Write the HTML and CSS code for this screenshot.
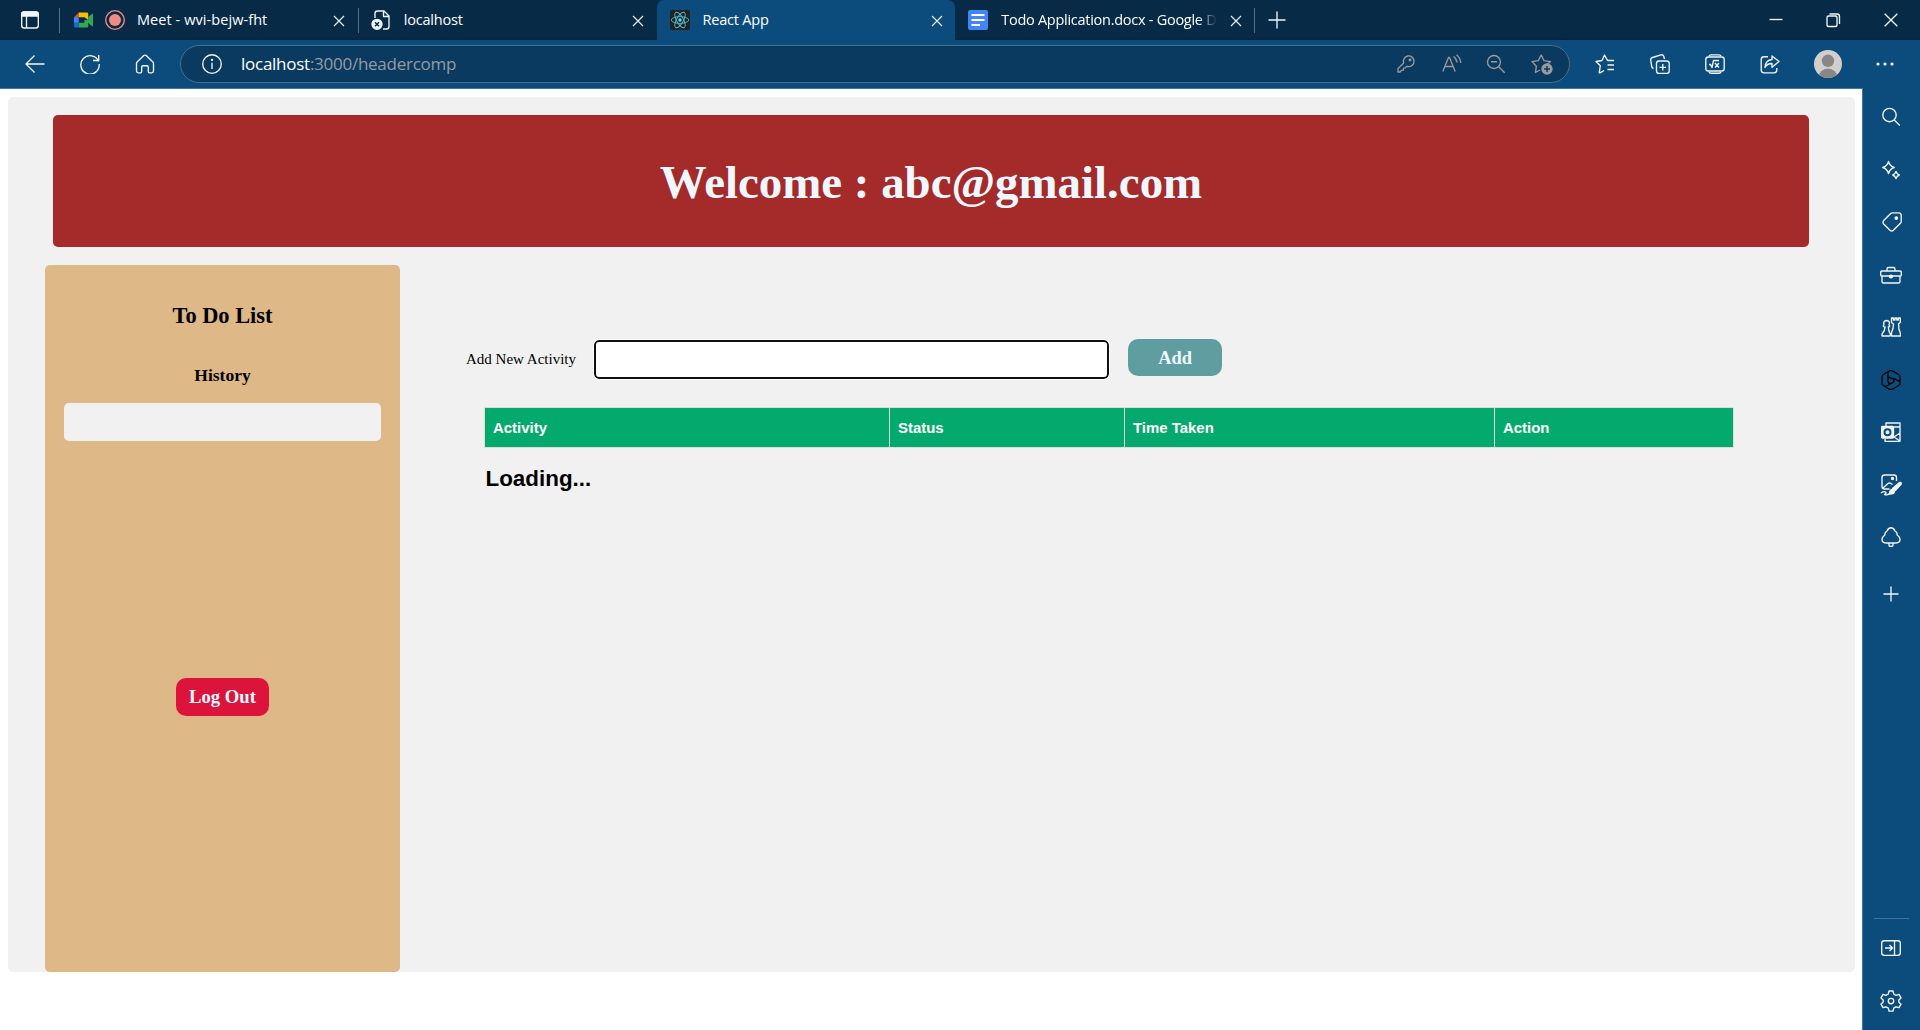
FILE: index.html
```html
<!DOCTYPE html>
<html lang="en">
<head>
<meta charset="utf-8">
<title>React App</title>
<link rel="stylesheet" href="styles.css">
</head>
<body>
<div class="browser">
  <header class="tabbar">
    <div class="tab-actions">
      <svg class="icon" viewBox="0 0 20 20"><rect x="1.7" y="2" width="16.6" height="16" rx="2.5"/><path class="solid" d="M1.7 6V4.5A2.5 2.5 0 0 1 4.2 2h11.6a2.5 2.5 0 0 1 2.5 2.5V6z"/><path d="M6.5 6v12"/></svg>
    </div>
    <div class="tab tab-meet divided">
      <svg class="favicon-meet" viewBox="0 0 20 16"><path fill="#ea4335" d="M5 0v5H0z"/><path fill="#fbbc04" d="M5 0h8.500Q15 0 15 1.500V8l-4-3H5z"/><path fill="#4285f4" d="M0 5h5v6H0z"/><path fill="#1967d2" d="M0 11h5v5H1.500Q0 16 0 14.500z"/><path fill="#34a853" d="M5 11h6V8h4V5l4-3.500q1-.5 1 .5v12q0 1-1 .5L15 11v3.500Q15 16 13.500 16H5z"/></svg>
      <svg class="icon rec" viewBox="0 0 20 20"><circle cx="10" cy="10" r="9.300"/><circle class="rec-dot" cx="10" cy="10" r="6"/></svg>
      <span class="tab-title">Meet - wvi-bejw-fht</span>
      <svg class="close" viewBox="0 0 12 12"><path d="M1 1l10 10M11 1L1 11"/></svg>
    </div>
    <div class="tab tab-local divided">
      <svg class="icon" viewBox="0 0 20 20"><path d="M4 8V3.500A2.500 2.500 0 0 1 6.500 1H13l5 5v10.500a2.500 2.500 0 0 1-2.500 2.500H12M12.500 1v5.500H18"/><circle class="solid" cx="6" cy="14.300" r="5"/><path class="dark" d="M4 12.300l4 4m0-4l-4 4"/></svg>
      <span class="tab-title">localhost</span>
      <svg class="close" viewBox="0 0 12 12"><path d="M1 1l10 10M11 1L1 11"/></svg>
    </div>
    <div class="tab tab-active">
      <svg class="favicon-react" viewBox="0 0 20 20"><rect width="20" height="20" rx="2" fill="#222"/><g fill="none" stroke="#53bdd6" stroke-width=".9"><ellipse cx="10" cy="10" rx="8.700" ry="3.400"/><ellipse cx="10" cy="10" rx="8.700" ry="3.400" transform="rotate(60 10 10)"/><ellipse cx="10" cy="10" rx="8.700" ry="3.400" transform="rotate(120 10 10)"/></g><circle cx="10" cy="10" r="1.700" fill="#61dafb"/></svg>
      <span class="tab-title">React App</span>
      <svg class="close" viewBox="0 0 12 12"><path d="M1 1l10 10M11 1L1 11"/></svg>
    </div>
    <div class="tab tab-docs">
      <svg class="icon" viewBox="0 0 20 20"><rect width="20" height="20" rx="2" fill="#4285f4" stroke="none"/><path stroke="#fff" stroke-width="2" d="M3.500 5h13M3.500 10h13M3.500 15H12"/></svg>
      <span class="tab-title fade">Todo Application.docx - Google D</span>
      <svg class="close" viewBox="0 0 12 12"><path d="M1 1l10 10M11 1L1 11"/></svg>
    </div>
    <div class="new-tab divided">
      <svg class="icon" viewBox="0 0 20 20"><path d="M10 1.500v17M1.500 10h17"/></svg>
    </div>
    <div class="window-controls">
      <svg class="icon" viewBox="0 0 20 20"><path d="M3.500 9.500h13"/></svg>
      <svg class="icon" viewBox="0 0 20 20"><rect x="4" y="6" width="10" height="10.500" rx="1.500"/><path d="M6.500 4h7.500q2.500 0 2.500 2.500V14"/></svg>
      <svg class="icon" viewBox="0 0 20 20"><path d="M3.700 3.700l12.600 12.600M16.300 3.700L3.700 16.300"/></svg>
    </div>
  </header>

  <nav class="toolbar">
    <div class="nav-button"><svg class="icon" viewBox="0 0 20 20"><path d="M19.500 10H1M9.500 1.500L1 10l8.500 8.500"/></svg></div>
    <div class="nav-button"><svg class="icon" viewBox="0 0 20 20"><path d="M18.600 7.500A9.200 9.200 0 1 0 19.200 10M18.700 1v5.500H13"/></svg></div>
    <div class="nav-button"><svg class="icon" viewBox="0 0 20 20"><path d="M1.500 9.500q0-1 .8-1.700l6.500-6.200q1.200-1 2.400 0l6.500 6.200q.8.7.8 1.700V17q0 1.800-1.800 1.800h-2.200q-1.200 0-1.200-1.300V13q0-1.300-1.300-1.300H8q-1.300 0-1.300 1.300v4.500q0 1.300-1.200 1.300H3.300Q1.500 18.800 1.500 17z"/></svg></div>
    <div class="address">
      <svg class="icon" viewBox="0 0 20 20"><circle cx="10" cy="10" r="9.300"/><path d="M10 8.700V15"/><circle class="solid" cx="10" cy="5.800" r=".5"/></svg>
      <span class="url"><span class="host">localhost</span>:3000/headercomp</span>
      <div class="address-actions">
        <svg class="icon" viewBox="0 0 20 20"><path d="M2 14.500L7.700 9A5.300 5.300 0 1 1 12 12.500l-1.500-.2-1.200 1.500-1.800.3-.2 2-2 .3L4 18H2z"/><circle class="solid" cx="14" cy="6" r=".8"/></svg>
        <svg class="icon read" viewBox="0 0 20 20"><path d="M.8 17.500L6.500 3.500h1l5.700 14M2.800 12.500h8.500M11.500 2.500q3 2 3.500 6M14.500.7q3.800 3 4.300 8.300"/></svg>
        <svg class="icon" viewBox="0 0 20 20"><circle cx="8" cy="8" r="6.500"/><path d="M5 7.700h6M12.700 12.700l6 6"/></svg>
        <svg class="icon wide" viewBox="0 0 22 22"><path d="M9 17l-4.600 2.500 1-6.300L1 8.600l6.200-1L10.200 2 13 7.600l6.500 1-3 2.400"/><circle class="solid" cx="16" cy="16" r="5"/><path class="bardark" d="M16 13v6M13 16h6"/></svg>
      </div>
    </div>
    <div class="tools">
      <svg class="icon" viewBox="0 0 20 20"><path d="M13 6h-.8L9.500 1 7 6.500l-6 1 4.300 4.300-1 6.400q-.1 1 .8.600L9 16.500M12.500 6.500H19M12.500 11H19M12.500 15.500H19"/></svg>
      <svg class="icon" viewBox="0 0 20 20"><rect x="6.500" y="7" width="12.700" height="12.500" rx="2.500"/><path d="M12.800 10v6.500M9.500 13.300h6.600M3.500 14.500Q2 14 1.700 12.500L.7 6Q.5 4 2.500 3.500L11 .8q2-.4 2.700 1.400L14.500 5"/></svg>
      <svg class="icon" viewBox="0 0 20 20"><rect x=".8" y="3" width="18.400" height="14" rx="2.500"/><path d="M4 2q.5-1.200 2-1.200h8q1.500 0 2 1.200M4 18q.5 1.200 2 1.200h8q1.500 0 2-1.200M4 10.500h1.500L7 13.500l1.500-7H14M10 9l4 4.500M14 9l-4 4.500"/></svg>
      <svg class="icon" viewBox="0 0 20 20"><path d="M8 2.700H4Q1.200 2.700 1.200 5.500V16q0 2.800 2.800 2.800h10q2.800 0 2.800-2.800v-2M12 2l7 5.500-7 5.700V9.500q-5 0-7 4 .5-7.500 7-8z"/></svg>
      <svg class="avatar" viewBox="0 0 28 28"><defs><clipPath id="face"><circle cx="14" cy="14" r="14"/></clipPath></defs><g clip-path="url(#face)"><path fill="#d1cfcd" d="M0 0h28v28H0z"/><circle cx="14" cy="10.800" r="6.200" fill="#8a8684"/><circle cx="14" cy="28" r="9.500" fill="#8a8684"/></g></svg>
      <svg class="icon more" viewBox="0 0 20 20"><g class="solid nostroke"><circle cx="3" cy="10" r="1.600"/><circle cx="10" cy="10" r="1.600"/><circle cx="17" cy="10" r="1.600"/></g></svg>
    </div>
  </nav>

  <div class="body">
    <main class="viewport">
      <div class="app">
        <section class="banner"><h1>Welcome : abc@gmail.com</h1></section>
        <div class="columns">
          <aside class="panel">
            <h2>To Do List</h2>
            <h3>History</h3>
            <div class="history"></div>
            <button class="logout">Log Out</button>
          </aside>
          <section class="content">
            <form class="add-form">
              <label for="activity">Add New Activity</label>
              <input id="activity" type="text">
              <button class="add" type="button">Add</button>
            </form>
            <table class="activities">
              <colgroup><col class="c-activity"><col class="c-status"><col class="c-time"><col class="c-action"></colgroup>
              <thead><tr><th>Activity</th><th>Status</th><th>Time Taken</th><th>Action</th></tr></thead>
            </table>
            <h2 class="loading">Loading...</h2>
          </section>
        </div>
      </div>
    </main>

    <aside class="edge-bar">
      <div class="cell"><svg class="icon" viewBox="0 0 20 20"><circle cx="8.500" cy="8" r="6.700"/><path d="M13.300 13l5.500 5.500"/></svg></div>
      <div class="cell"><svg class="icon" viewBox="0 0 20 20"><path d="M7.500 1.500q1.200 4.500 5.700 6-4.500 1.500-5.700 6-1.200-4.500-5.700-6 4.500-1.500 5.700-6zM15 11.500q.7 2.600 3.300 3.500-2.600.9-3.300 3.500-.7-2.600-3.300-3.500 2.600-.9 3.300-3.500z"/></svg></div>
      <div class="cell"><svg class="icon shift" viewBox="0 0 20 20"><path d="M10.500.8h6.200q2.500 0 2.500 2.500V9.500q0 1-.8 1.800l-7 7q-1.700 1.500-3.400 0l-6.300-6.300q-1.500-1.700 0-3.400l7-7q.8-.8 1.800-.8z"/><circle class="solid" cx="14.300" cy="6" r="1.200"/></svg></div>
      <div class="cell"><svg class="icon wide" viewBox="0 0 22 20"><rect x=".7" y="6" width="20.600" height="5" rx="1"/><path d="M2 11v5.500q0 1.500 1.500 1.500h15q1.500 0 1.500-1.500V11M7 6V4q0-1.500 1.500-1.500h5Q15 2.500 15 4v2"/><circle class="solid" cx="11" cy="11.500" r="1.400"/></svg></div>
      <div class="cell"><svg class="icon" viewBox="0 0 20 20"><path d="M3 10q-1.500-1 0-2-1.200-4 2.500-4.500Q9.500 4 8 8q1.500 1 0 2M3 10h1q0 3.500-2.700 6.500-.8 2.500.2 2.500H9q1.200-1 0-2.500Q7.500 14 7.300 10H8M10.500 1v4.500l2 1.500q0 4.500-2 8.500v3.500h9v-2.500Q17.500 13 17.500 7l1.800-1.500V1h-2v2h-1.500V1H14v2h-1.500V1z"/></svg></div>
      <div class="cell"><svg class="icon black" viewBox="0 0 20 20"><path d="M10 .5Q11 .5 17.500 4.500q1.500.8 1.500 2v7q0 1.200-1.500 2L12 19q-2 1-4 0l-5.500-3.500Q1 14.700 1 13.500v-7q0-1.200 1.500-2L8 1.200Q9 .5 10 .5zM7 2v9q0 2.500 2.500 2.500t3.500-2L12.500 9l-5.500-2M12 8l6.800 3.500M13 12l-8.500 4.500"/></svg></div>
      <div class="cell"><svg class="icon" viewBox="0 0 20 20"><path d="M5 4V1h14v18.300H4V17M12 5h7M19 11l-6 4 6 4"/><rect class="solid" x=".5" y="4.500" width="12" height="11.500" rx="1"/><circle class="bar-ring" cx="6.500" cy="10.200" r="3"/></svg></div>
      <div class="cell"><svg class="icon wide photo" viewBox="0 0 22 22"><path d="M9.500 15H4.500Q2 15 2 12.500V3.500Q2 1 4.500 1H14q2.500 0 2.500 2.500V7M3 14l5-4.500q1.500-1 3 0l1.500 1M1 19q3-2 4.500-1t-1 2.500q3 1 5-1"/><path class="solid" d="M12.500 14.500L19.500 8.500q2-.5 1.800 1.500l-6 6.500zM9.500 20q0-4 2.700-4.500l2.300 1.700q0 3-5 2.800z"/><circle class="solid" cx="12.500" cy="4.500" r="1"/></svg></div>
      <div class="cell"><svg class="icon" viewBox="0 0 20 20"><path d="M10 .7q2.700 0 4 3.300 2.500 1.500 2 3.700 3 2.300 3 4.600 0 3.700-4 3.700H5q-4 0-4-3.700 0-2.300 3-4.600Q3.500 5.500 6 4 7.300.7 10 .7zM8 16v2q0 1.500 2 1.500t2-1.500v-2"/></svg></div>
      <div class="cell plus"><svg class="icon" viewBox="0 0 20 20"><path d="M10 2.500v15M2.500 10h15"/></svg></div>
      <div class="edge-bottom">
        <div class="cell"><svg class="icon" viewBox="0 0 20 20"><rect x=".7" y="2.700" width="18.600" height="14.600" rx="2.500"/><path d="M13.500 3v14M4 10h7M8.500 7l3 3-3 3"/></svg></div>
        <div class="cell"><svg class="icon wide" viewBox="0 0 22 22"><circle cx="11" cy="11" r="2.700"/><path d="M9 1h4l.7 3 2.300 1.300 3-.9 2 3.500L18.800 10v2l2.200 2.200-2 3.500-3-.9-2.300 1.300-.7 3H9l-.7-3L6 16.800l-3 .9-2-3.500L3.200 12v-2L1 7.900l2-3.500 3 .9L8.300 4z"/></svg></div>
      </div>
    </aside>
  </div>
</div>
</body>
</html>
```
FILE: styles.css
```css
* { box-sizing: border-box; }
body { margin: 0; overflow: hidden; }
button { border: 0; padding: 0; }
h1, h2, h3 { margin: 0; }

.browser {
  width: 1920px; height: 1030px;
  display: flex; flex-direction: column;
  background: #0c4c7c;
  font-family: "Open Sans", "Noto Sans", sans-serif;
}

.icon { width: 20px; height: 20px; flex: none; fill: none; stroke: #f1f5f8; stroke-width: 1.35; stroke-linejoin: round; }
.icon.wide { width: 22px; height: 22px; }
.icon.black { stroke: #050505; stroke-width: 1.4; }
.icon .solid { fill: #f1f5f8; }
.icon .nostroke { stroke: none; }
.icon .dark { stroke: #072b47; stroke-width: 1.5; }
.icon .bardark { stroke: #0a3a60; stroke-width: 1.5; }
.icon .bar-ring { stroke: #0c4c7c; stroke-width: 2; }

/* Tab strip */
.tabbar { height: 40px; display: flex; background: #072b47; box-shadow: inset 0 -2px 2px -1px #05203a; }
.tab-actions { width: 59px; display: flex; align-items: center; justify-content: center; }
.tab { width: 298.75px; display: flex; align-items: center; padding: 0 12.500px 0 13px; }
.divided { background: linear-gradient(#58708a, #58708a) 0 8px / 1px 25px no-repeat; }
.tab .icon, .favicon-react { margin-right: 13px; width: 20px; height: 20px; }
.tab-title { flex: 1; font-size: 14.500px; line-height: 20px; color: #fff; white-space: nowrap; letter-spacing: -.2px; }
.close { width: 12px; height: 12px; fill: none; stroke: #e6ebef; stroke-width: 1.200; flex: none; margin-top: 1px; }
.tab-meet { padding-left: 15px; }
.tab-meet .tab-title { letter-spacing: .07px; }
.favicon-meet { width: 19px; height: 16px; margin-right: 12px; flex: none; }
.tab .rec { stroke: #f28b82; margin-right: 12px; }
.rec-dot { fill: #f28b82; stroke: none; }
.tab-active { background: #0c4c7c; border-radius: 7px 7px 0 0; }
.fade { margin-right: 13px; letter-spacing: -.27px; -webkit-mask-image: linear-gradient(90deg, #000 91%, transparent); mask-image: linear-gradient(90deg, #000 91%, transparent); }
.new-tab { width: 45px; display: flex; align-items: center; justify-content: center; }
.window-controls { margin-left: auto; width: 173px; display: flex; align-items: center; justify-content: space-around; }

/* Address row */
.toolbar { height: 48px; flex: none; display: flex; align-items: center; padding-left: 7px; }
.nav-button { width: 55px; height: 48px; display: flex; align-items: center; justify-content: center; }
.address {
  width: 1390px; height: 38px; margin-left: 8px; padding: 0 16px 0 21px;
  display: flex; align-items: center;
  border: 1px solid #45708f; border-radius: 19px; background: #0a3a60;
}
.url { margin-left: 19px; font-size: 17px; line-height: 24px; color: #949ca3; letter-spacing: -.26px; }
.host { color: #fff; }
.address-actions { margin-left: auto; display: flex; align-items: center; gap: 25px; }
.address-actions .icon { stroke: #9a9a9a; }
.address-actions .icon .solid { fill: #9a9a9a; }
.read { margin: 0 -1px 0 1px; }
.tools { display: flex; align-items: center; padding-left: 25px; gap: 35px; }
.avatar { width: 28px; height: 28px; margin-left: -1px; }
.more { margin-left: -2px; }

/* Page and side bar */
.body { flex: 1; display: flex; min-height: 0; }
.viewport { width: 1863px; border: solid #41779f; border-width: 1px 1px 0 0; padding: 8px 7px 0 8px; background: #fff; }
.app {
  height: 875px; padding: 18px 46px 0 37px;
  display: flex; flex-direction: column; gap: 18px;
  background: #f1f1f1; border-radius: 5px;
  font-family: "Liberation Serif", serif;
}
.banner { width: 1756px; margin-left: 8px; height: 132px; flex: none; display: flex; justify-content: center; padding-top: 40px; background: brown; border-radius: 5px; }
.banner h1 { font-size: 46.900px; line-height: 55px; color: aliceblue; }
.columns { flex: 1; display: flex; }
.panel { width: 355px; padding: 37px 19px 0; display: flex; flex-direction: column; align-items: center; background: burlywood; border-radius: 5px; }
.panel h2 { font-size: 22.400px; line-height: 28px; }
.panel h3 { margin-top: 34px; font-size: 17.500px; line-height: 22px; }
.history { width: 317px; height: 38px; margin-top: 17px; border-radius: 5px; background: #f1f1f1; }
.logout { width: 93px; height: 38px; margin-top: 237px; border-radius: 10px; background: crimson; color: aliceblue; font: bold 18.700px "Liberation Serif", serif; }
.content { padding: 74px 0 0 66px; }
.add-form { display: flex; align-items: flex-start; }
.add-form label { width: 110px; margin: 11px 18px 0 0; font-size: 15px; line-height: 18px; white-space: nowrap; }
.add-form input { width: 515px; height: 39px; margin-top: 1px; border: 2px solid #101010; border-radius: 5px; outline: 1px solid #fff; background: #fff; }
.add { width: 94px; height: 37px; margin-left: 19px; padding-top: 2px; border-radius: 10px; background: cadetblue; color: aliceblue; font: bold 18.400px "Liberation Serif", serif; }
.activities { width: 1249px; height: 41px; margin: 28px 0 0 18px; table-layout: fixed; border-collapse: collapse; font-family: "Liberation Sans", sans-serif; }
.activities th { padding: 0 8px; height: 40px; border: 1px solid #ddd; background: #04aa6d; color: #fff; font-size: 14.950px; line-height: 18px; text-align: left; }
.c-activity { width: 405px; }
.c-status { width: 235px; }
.c-time { width: 370px; }
.c-action { width: 239px; }
.loading { margin: 18px 0 0 19.500px; font: bold 22.400px/26px "Liberation Sans", sans-serif; }

.edge-bar { flex: 1; display: flex; flex-direction: column; padding: 3px 1.500px 0 0; }
.cell { height: 52.500px; flex: none; display: flex; align-items: center; justify-content: center; }
.shift { margin-left: 3px; }
.plus { margin-top: 4px; }
.edge-bottom { margin: auto 10px 3px 11px; border-top: 1px solid #3f739b; padding-top: 3px; }
```
